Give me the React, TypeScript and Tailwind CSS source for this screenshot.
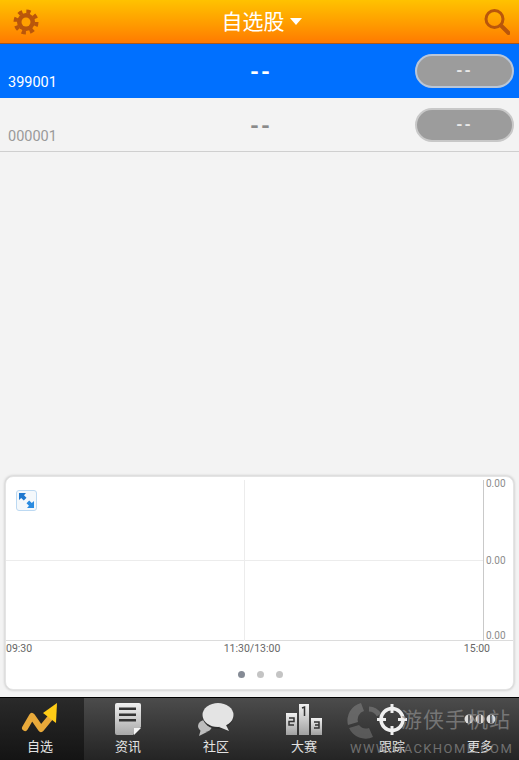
const FONT = "font-['Roboto','Noto_Sans_CJK_SC',sans-serif]";

function StockRow({ code, active }: { code: string; active?: boolean }) {
  return (
    <div
      className={
        "box-border flex h-[54px] items-start justify-between " +
        (active ? "bg-[#0070ff]" : "border-b border-[#cfcfcf] bg-[#f3f3f3]")
      }
    >
      <span className={"mt-[29px] w-[100px] pl-2 text-[14.500px] leading-[20px] " + (active ? "text-white" : "text-[#9a9a9a]")}>
        {code}
      </span>
      <span className={"ml-[7px] mt-[15px] text-[23px] font-bold leading-[28px] tracking-[2px] " + (active ? "text-white" : "text-[#8a8a8a]")}>
        --
      </span>
      <span
        className={
          "mr-[5px] mt-[10px] flex h-[34px] w-[99px] items-center justify-center rounded-full border-2 bg-[#9c9c9c] text-[16px] font-bold tracking-[2px] text-[#e8e8e8] " +
          (active ? "border-[#b9c6d8]" : "border-[#c8c8c8]")
        }
      >
        --
      </span>
    </div>
  );
}

function ChartCard() {
  return (
    <div className="mx-[5px] mt-[324px] h-[215px] rounded-[8px] border border-[#e4e4e4] bg-white shadow-[0_0_3px_rgba(0,0,0,0.25)]">
      <div className="relative h-[164px]">
        <div className="absolute bottom-0 left-0 right-0 h-px bg-[#dcdcdc]" />
        <div className="absolute left-0 right-[30px] top-[83px] h-px bg-[#ececec]" />
        <div className="absolute bottom-0 left-[238px] top-[3px] w-px bg-[#ececec]" />
        <div className="absolute bottom-0 left-[477px] top-[3px] w-px bg-[#c9c9c9]" />
        <span className="absolute left-[480px] top-[1px] text-[10px] leading-[12px] text-[#8c8c8c]">0.00</span>
        <span className="absolute left-[480px] top-[78px] text-[10px] leading-[12px] text-[#8c8c8c]">0.00</span>
        <span className="absolute left-[480px] top-[153px] text-[10px] leading-[12px] text-[#8c8c8c]">0.00</span>
        <div className="absolute left-[10px] top-[13px] flex h-[21px] w-[21px] items-center justify-center rounded-[3px] border border-[#bcd9f2] bg-[#f4f8fb]">
          <svg width="17" height="17" viewBox="0 0 17 17">
            <path d="M1 1h7L6 3.200 8.500 5.800 5.800 8.500 3.200 6 1 8z" fill="#1f78cf" />
            <path d="M16 16H9l2-2.200-2.500-2.600 2.700-2.700 2.600 2.500L16 9z" fill="#2a8be0" />
          </svg>
        </div>
      </div>
      <div className="flex justify-between pr-[23px] pt-[1px] text-[10.500px] leading-[14px] text-[#666]">
        <span>09:30</span>
        <span className="ml-[8px]">11:30/13:00</span>
        <span>15:00</span>
      </div>
      <div className="mt-[15px] flex justify-center gap-[12px] pl-[1px]">
        <span className="h-[7px] w-[7px] rounded-full bg-[#858b95]" />
        <span className="h-[7px] w-[7px] rounded-full bg-[#c4c4c4]" />
        <span className="h-[7px] w-[7px] rounded-full bg-[#c4c4c4]" />
      </div>
    </div>
  );
}

const TABS = [
  {
    label: "自选",
    icon: (
      <svg width="38" height="32" viewBox="0 0 38 32">
        <path d="M4 25 11 13l9 13 9-11" fill="none" stroke="#e8a93a" strokeWidth="6" strokeLinejoin="round" strokeLinecap="round" />
        <path d="M22 10 36 0l-1 20z" fill="#ffcc16" />
      </svg>
    ),
  },
  {
    label: "资讯",
    icon: (
      <svg width="28" height="33" viewBox="0 0 28 33">
        <defs>
          <linearGradient id="doc" x1="0" y1="0" x2="0" y2="1">
            <stop offset="0" stopColor="#f0f0f0" />
            <stop offset="1" stopColor="#a8a8a8" />
          </linearGradient>
        </defs>
        <path d="M3 0h22a2 2 0 0 1 2 2v22l-8 8H3a2 2 0 0 1-2-2V2a2 2 0 0 1 2-2z" fill="url(#doc)" />
        <path d="M5 4.500h17v2.500H5zM5 10.500h17V13H5zM5 16h17v2.500H5z" fill="#333" />
        <path d="M20 32v-7h7z" fill="#f5f5f5" />
      </svg>
    ),
  },
  {
    label: "社区",
    icon: (
      <svg width="36" height="33" viewBox="0 0 36 33">
        <ellipse cx="7" cy="23" rx="7" ry="6" fill="#bdbdbd" />
        <path d="M3 26 1 33l8-4z" fill="#bdbdbd" />
        <ellipse cx="20" cy="13" rx="15.500" ry="13" fill="#2e2e2e" />
        <ellipse cx="20" cy="12" rx="15.500" ry="12" fill="#e4e4e4" />
        <path d="M27 20l4 8-10-4z" fill="#e4e4e4" />
      </svg>
    ),
  },
  {
    label: "大赛",
    icon: (
      <svg width="36" height="33" viewBox="0 0 36 33">
        <defs>
          <linearGradient id="bar" x1="0" y1="0" x2="0" y2="1">
            <stop offset="0" stopColor="#f2f2f2" />
            <stop offset="1" stopColor="#a0a0a0" />
          </linearGradient>
        </defs>
        <rect x="0" y="10" width="11" height="22" fill="url(#bar)" />
        <rect x="13" y="1" width="10" height="31" fill="url(#bar)" />
        <rect x="25" y="15" width="11" height="17" fill="url(#bar)" />
        <path d="M3 15h5v3.500H3V22h5M16 5l2.500-1v9M28 19h5v3h-4 4v3h-5" fill="none" stroke="#333" strokeWidth="1.500" />
      </svg>
    ),
  },
  {
    label: "跟踪",
    icon: (
      <svg width="32" height="33" viewBox="0 0 32 33">
        <circle cx="16" cy="16.500" r="11" fill="none" stroke="#efefef" strokeWidth="3.500" />
        <path d="M16 1v9M16 23v9M1 16.500h9M22 16.500h9" stroke="#efefef" strokeWidth="3" />
      </svg>
    ),
  },
  {
    label: "更多",
    icon: (
      <svg width="32" height="14" viewBox="0 0 32 14">
        <circle cx="5" cy="7" r="4.500" fill="#ddd" />
        <circle cx="16" cy="7" r="4.500" fill="#ddd" />
        <circle cx="27" cy="7" r="4.500" fill="#ddd" />
        <path d="M5 3v8M16 3v8M27 3v8" stroke="#333" strokeWidth="1.500" />
      </svg>
    ),
  },
];

function TabBar() {
  return (
    <nav className="relative mt-[7px] flex h-[63px] overflow-hidden border-t border-black bg-gradient-to-b from-[#4c4c4c] to-[#242424]">
      {TABS.map((t, i) => (
        <div
          key={t.label}
          className={
            "flex shrink-0 flex-col items-center " +
            (i === 0 ? "w-[84px] bg-gradient-to-b from-[#2a2a2a] to-[#141414] pr-[4px]" : "w-[88px]")
          }
        >
          <div className="flex h-[38px] items-center pt-[4px]">{t.icon}</div>
          <span className="mt-[2px] text-[13px] leading-[18px] text-[#e2e2e2]">{t.label}</span>
        </div>
      ))}
      {/* site watermark stamped over the tab bar */}
      <div className="pointer-events-none absolute left-[347px] top-[1px] flex h-[60px] w-[172px] flex-col whitespace-nowrap text-[#8d8d8d] opacity-70">
        <div className="flex h-[42px] items-center">
          <svg width="36" height="38" viewBox="0 0 36 38">
            <path d="M14 2A18 18 0 0 0 1 24l10-3a9 9 0 0 1 6-11z" fill="#777" />
            <path d="M2 27a18 18 0 0 0 24 9l-4-9a9 9 0 0 1-10-3z" fill="#6a6a6a" />
            <path d="M22 8a12 12 0 0 1 10 6" fill="none" stroke="#777" strokeWidth="5" />
          </svg>
          <span className="ml-[18px] text-[21px] leading-[30px] tracking-[1px]">游侠手机站</span>
        </div>
        <span className="pl-[3px] text-[13px] leading-[15px] tracking-[1.400px]">WWW.HACKHOME.COM</span>
      </div>
    </nav>
  );
}

export default function App() {
  return (
    <div className={"flex h-[760px] w-[519px] flex-col overflow-hidden bg-[#f3f3f3] " + FONT}>
      <header className="box-border flex h-[44px] shrink-0 items-center justify-between border-b border-[#a8561a] bg-gradient-to-b from-[#ffc200] to-[#ff7a00] pl-[13px] pr-[9px]">
        <svg width="26" height="26" viewBox="0 0 26 26">
          <circle cx="13" cy="13" r="9" fill="#b9560b" />
          <circle cx="13" cy="13" r="10.500" fill="none" stroke="#b9560b" strokeWidth="4" strokeDasharray="4.250 4" />
          <circle cx="13" cy="13" r="4.500" fill="#ffa000" />
        </svg>
        <div className="flex items-center">
          <span className="text-[21px] leading-[30px] text-white">自选股</span>
          <span className="ml-[5px] h-0 w-0 border-x-[6px] border-t-[7px] border-x-transparent border-t-white" />
        </div>
        <svg width="26" height="26" viewBox="0 0 26 26">
          <circle cx="10.500" cy="10" r="8.500" fill="none" stroke="#b9560b" strokeWidth="3" />
          <path d="M17 16.500l7.500 7.500" stroke="#b9560b" strokeWidth="4" strokeLinecap="round" />
        </svg>
      </header>
      <StockRow code="399001" active />
      <StockRow code="000001" />
      <ChartCard />
      <TabBar />
    </div>
  );
}
